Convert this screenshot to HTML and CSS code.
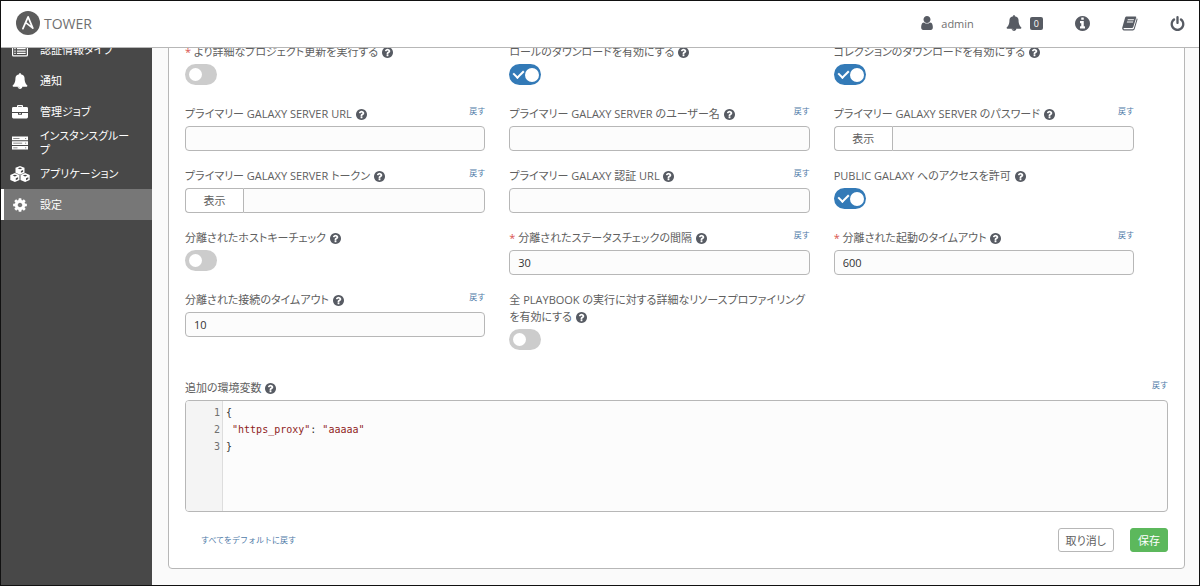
FILE: index.html
```html
<!DOCTYPE html>
<html lang="ja">
<head>
<meta charset="utf-8">
<meta name="viewport" content="width=device-width, initial-scale=1">
<title>TOWER - 設定</title>
<link rel="stylesheet" href="styles.css">
</head>
<body>
<svg class="sprite" aria-hidden="true">
  <symbol id="i-help" viewBox="128 128 1536 1536"><path d="M1024 1376v-192q0-14-9-23t-23-9h-192q-14 0-23 9t-9 23v192q0 14 9 23t23 9h192q14 0 23-9t9-23zm256-672q0-88-55.500-163t-138.500-116-170-41q-243 0-371 213-15 24 8 42l132 100q7 6 19 6 16 0 25-12 53-68 86-92 34-24 86-24 48 0 85.500 26t37.500 59q0 38-20 61t-68 45q-63 28-115.500 86.500t-52.500 125.500v36q0 14 9 23t23 9h192q14 0 23-9t9-23q0-19 21.500-49.500t54.500-49.500q32-18 49-28.500t46-35 44.500-48 28-60.500 12.500-81zm384 192q0 209-103 385.500t-279.500 279.500-385.500 103-385.500-103-279.500-279.500-103-385.500 103-385.500 279.500-279.500 385.500-103 385.500 103 279.500 279.500 103 385.500z"/></symbol>
  <symbol id="i-bell" viewBox="0 0 1792 1792"><path d="M912 1696q0-16-16-16-59 0-101.500-42.500t-42.500-101.500q0-16-16-16t-16 16q0 73 51.500 124.500t124.500 51.500q16 0 16-16zm816-288q0 52-38 90t-90 38h-448q0 106-75 181t-181 75-181-75-75-181h-448q-52 0-90-38t-38-90q50-42 91-88t85-119.500 74.500-158.500 50-206 19.500-260q0-152 117-282.500t307-158.500q-8-19-8-39 0-40 28-68t68-28 68 28 28 68q0 20-8 39 190 28 307 158.500t117 282.500q0 139 19.500 260t50 206 74.500 158.500 85 119.500 91 88z"/></symbol>
</svg>

<header class="topbar">
  <a class="brand" href="#">
    <svg class="brand-mark" viewBox="0 0 24 24" aria-hidden="true"><circle cx="12" cy="12" r="12" fill="#5c5c5c"/><path d="M6.900 17.600 12.100 5.900l4.700 11.300-7-5.500" fill="none" stroke="#fff" stroke-width="1.700" stroke-linejoin="round" stroke-linecap="round"/></svg>
    <span>TOWER</span>
  </a>
  <nav class="tools" aria-label="ユーザー">
    <a class="tool" href="#">
      <svg class="icon icon-user" viewBox="256 128 1280 1536" aria-hidden="true"><path d="M1536 1399q0 109-62.500 187t-150.500 78h-854q-88 0-150.500-78t-62.500-187q0-85 8.500-160.500t31.500-152 58.500-131 94-89 134.500-34.500q131 128 313 128t313-128q76 0 134.500 34.500t94 89 58.500 131 31.500 152 8.500 160.500zm-256-887q0 159-112.500 271.500t-271.500 112.500-271.500-112.500-112.500-271.500 112.500-271.500 271.500-112.500 271.500 112.500 112.500 271.500z"/></svg>
      <span>admin</span>
    </a>
    <a class="tool" href="#" aria-label="通知">
      <svg class="icon icon-bell" aria-hidden="true"><use href="#i-bell"/></svg>
      <span class="badge">0</span>
    </a>
    <a class="tool" href="#" aria-label="情報">
      <svg class="icon" viewBox="128 128 1536 1536" aria-hidden="true"><path d="M1152 1376v-160q0-14-9-23t-23-9h-96v-512q0-14-9-23t-23-9h-320q-14 0-23 9t-9 23v160q0 14 9 23t23 9h96v320h-96q-14 0-23 9t-9 23v160q0 14 9 23t23 9h448q14 0 23-9t9-23zm-128-896v-160q0-14-9-23t-23-9h-192q-14 0-23 9t-9 23v160q0 14 9 23t23 9h192q14 0 23-9t9-23zm640 416q0 209-103 385.500t-279.500 279.500-385.500 103-385.500-103-279.500-279.500-103-385.500 103-385.500 279.500-279.500 385.500-103 385.500 103 279.500 279.500 103 385.500z"/></svg>
    </a>
    <a class="tool" href="#" aria-label="ドキュメント">
      <svg class="icon icon-book" viewBox="0 0 16 15" aria-hidden="true"><path fill-rule="evenodd" d="M4.200.5h9.300q1 0 .7 1L11.300 11q-.3.900-1.300.9H2.300q-1.100 0-.8.800.2.600 1.100.6h8.300q.7 0 .9-.7L14.600 3q.1-.4 0-.8 1.200.4.900 1.400l-2.800 9.500q-.4 1.400-1.900 1.400H2.400Q.8 14.500.300 13q-.2-.6 0-1.400L3 2Q3.300.5 4.200.5zM5.800 3.200l-.3 1h6.200l.3-1zM5.100 5.500l-.3 1H11l.3-1z"/></svg>
    </a>
    <a class="tool" href="#" aria-label="ログアウト">
      <svg class="icon" viewBox="128 0 1536 1664" aria-hidden="true"><path d="M1664 896q0 156-61 298t-164 245-245 164-298 61-298-61-245-164-164-245-61-298q0-182 80.500-343t226.500-270q43-32 95.500-25t83.500 50q32 42 24.500 94.500t-49.500 84.500q-98 74-151.500 181t-53.500 228q0 104 40.500 198.500t109.500 163.500 163.500 109.500 198.500 40.500 198.500-40.500 163.500-109.500 109.500-163.500 40.500-198.500q0-121-53.500-228t-151.500-181q-42-32-49.500-84.500t24.500-94.500q31-43 84-50t95 25q146 109 226.500 270t80.500 343zm-640-768v640q0 52-38 90t-90 38-90-38-38-90v-640q0-52 38-90t90-38 90 38 38 90z"/></svg>
    </a>
  </nav>
</header>

<div class="shell">
  <nav class="sidebar" aria-label="メイン">
    <a class="side-item" href="#"><svg class="side-icon" viewBox="0 0 16 16" aria-hidden="true"><path fill-rule="evenodd" d="M1.500 1.500h13q1.500 0 1.500 1.500v10q0 1.500-1.500 1.500h-13Q0 14.500 0 13V3q0-1.500 1.500-1.500zM1.200 4.500V13q0 .3.300.3h13q.3 0 .3-.3V4.500zM2.300 6h1.400v1.300H2.300zm2.600 0h8.800v1.300H4.900zM2.300 8.400h1.400v1.300H2.300zm2.600 0h8.800v1.300H4.900zM2.300 10.800h1.400v1.300H2.300zm2.600 0h8.800v1.300H4.900z"/></svg><span>認証情報タイプ</span></a>
    <a class="side-item" href="#"><svg class="side-icon" aria-hidden="true"><use href="#i-bell"/></svg><span>通知</span></a>
    <a class="side-item" href="#"><svg class="side-icon" viewBox="0 0 16 16" aria-hidden="true"><path fill-rule="evenodd" d="M5 3V2q0-1 1-1h4q1 0 1 1v1h3.600Q16 3 16 4.400V8H0V4.400Q0 3 1.400 3zm1.200 0h3.600v-.8H6.200zM0 9h6v1.200q0 .5.500.5h3q.5 0 .5-.5V9h6v4.100q0 1.400-1.400 1.400H1.400Q0 14.500 0 13.100zm7 0h2v.8H7z"/></svg><span>管理ジョブ</span></a>
    <a class="side-item" href="#"><svg class="side-icon" viewBox="0 0 16 16" aria-hidden="true"><path d="M0 1.500h16v3.700H0zM0 6.200h16v3.700H0zM0 10.900h16v3.700H0z"/><path d="M1.200 3h6.300v.8H1.200zM13 3h1.200v.8H13zM1.200 7.700h9v.8h-9zM13 7.700h1.200v.8H13zM1.200 12.400h4.300v.8H1.200zM13 12.400h1.200v.8H13z" fill="#666"/></svg><span>インスタンスグループ</span></a>
    <a class="side-item" href="#"><svg class="side-icon side-icon-wide" viewBox="0 0 20 16" aria-hidden="true"><path d="M10 0l4.500 1.700v5L10 8.700 5.500 6.700v-5zM4.900 7l4.600 1.900v5L4.900 16 .3 13.900v-5zM15.100 7l4.600 1.900v5L15.100 16l-4.600-2.100v-5z"/><path d="M10 1.400l2.300.9-2.300.9-2.300-.9zM4.900 8.700l2.300.9-2.300.9-2.300-.9zM15.100 8.700l2.300.9-2.300.9-2.300-.9zM10.900 5l2.200-.9v1.700l-2.200 1zM5.800 12.300l2.300-1v1.800l-2.300 1.100zM16 12.300l2.300-1v1.800L16 14.200z" fill="#484848"/></svg><span>アプリケーション</span></a>
    <a class="side-item side-item-active" href="#" aria-current="page"><svg class="side-icon" viewBox="0 0 1792 1792" aria-hidden="true"><path d="M1152 896q0-106-75-181t-181-75-181 75-75 181 75 181 181 75 181-75 75-181zm512-109v222q0 12-8 23t-20 13l-185 28q-19 54-39 91 35 50 107 138 10 12 10 25t-9 23q-27 37-99 108t-94 71q-12 0-26-9l-138-108q-44 23-91 38-16 136-29 186-7 28-36 28h-222q-14 0-24.500-8.500t-11.500-21.500l-28-184q-49-16-90-37l-141 107q-10 9-25 9-14 0-25-11-126-114-165-168-7-10-7-23 0-12 8-23 15-21 51-66.500t54-70.500q-27-50-41-99l-183-27q-13-2-21-12.500t-8-23.500v-222q0-12 8-23t19-13l186-28q14-46 39-92-40-57-107-138-10-12-10-24 0-10 9-23 26-36 98.500-107.500t94.500-71.500q13 0 26 10l138 107q44-23 91-38 16-136 29-186 7-28 36-28h222q14 0 24.500 8.500t11.500 21.500l28 184q49 16 90 37l142-107q9-9 24-9 13 0 25 10 129 119 165 170 7 8 7 22 0 12-8 23-15 21-51 66.500t-54 70.500q26 50 41 98l183 28q13 2 21 12.500t8 23.500z"/></svg><span>設定</span></a>
  </nav>

  <main class="main">
    <form class="panel">
      <div class="fields">
        <div class="field">
          <div class="field-head"><label for="f1"><span class="req">*</span> より詳細なプロジェクト更新を実行する <svg class="help"><use href="#i-help"/></svg></label></div>
          <input class="toggle" type="checkbox" id="f1">
        </div>
        <div class="field">
          <div class="field-head"><label for="f2">ロールのダウンロードを有効にする <svg class="help"><use href="#i-help"/></svg></label></div>
          <input class="toggle" type="checkbox" id="f2" checked>
        </div>
        <div class="field">
          <div class="field-head"><label for="f3">コレクションのダウンロードを有効にする <svg class="help"><use href="#i-help"/></svg></label></div>
          <input class="toggle" type="checkbox" id="f3" checked>
        </div>

        <div class="field">
          <div class="field-head"><label for="f4">プライマリー GALAXY SERVER URL <svg class="help"><use href="#i-help"/></svg></label><a class="revert" href="#">戻す</a></div>
          <input class="text" type="text" id="f4">
        </div>
        <div class="field">
          <div class="field-head"><label for="f5">プライマリー GALAXY SERVER のユーザー名 <svg class="help"><use href="#i-help"/></svg></label><a class="revert" href="#">戻す</a></div>
          <input class="text" type="text" id="f5">
        </div>
        <div class="field">
          <div class="field-head"><label for="f6">プライマリー GALAXY SERVER のパスワード <svg class="help"><use href="#i-help"/></svg></label><a class="revert" href="#">戻す</a></div>
          <div class="group"><button class="show" type="button">表示</button><input class="text" type="password" id="f6"></div>
        </div>

        <div class="field">
          <div class="field-head"><label for="f7">プライマリー GALAXY SERVER トークン <svg class="help"><use href="#i-help"/></svg></label><a class="revert" href="#">戻す</a></div>
          <div class="group"><button class="show" type="button">表示</button><input class="text" type="password" id="f7"></div>
        </div>
        <div class="field">
          <div class="field-head"><label for="f8">プライマリー GALAXY 認証 URL <svg class="help"><use href="#i-help"/></svg></label><a class="revert" href="#">戻す</a></div>
          <input class="text" type="text" id="f8">
        </div>
        <div class="field">
          <div class="field-head"><label for="f9">PUBLIC GALAXY へのアクセスを許可 <svg class="help"><use href="#i-help"/></svg></label></div>
          <input class="toggle" type="checkbox" id="f9" checked>
        </div>

        <div class="field">
          <div class="field-head"><label for="f10">分離されたホストキーチェック <svg class="help"><use href="#i-help"/></svg></label></div>
          <input class="toggle" type="checkbox" id="f10">
        </div>
        <div class="field">
          <div class="field-head"><label for="f11"><span class="req">*</span> 分離されたステータスチェックの間隔 <svg class="help"><use href="#i-help"/></svg></label><a class="revert" href="#">戻す</a></div>
          <input class="text" type="text" id="f11" value="30">
        </div>
        <div class="field">
          <div class="field-head"><label for="f12"><span class="req">*</span> 分離された起動のタイムアウト <svg class="help"><use href="#i-help"/></svg></label><a class="revert" href="#">戻す</a></div>
          <input class="text" type="text" id="f12" value="600">
        </div>

        <div class="field">
          <div class="field-head"><label for="f13">分離された接続のタイムアウト <svg class="help"><use href="#i-help"/></svg></label><a class="revert" href="#">戻す</a></div>
          <input class="text" type="text" id="f13" value="10">
        </div>
        <div class="field">
          <div class="field-head"><label for="f14">全 PLAYBOOK の実行に対する詳細なリソースプロファイリングを有効にする <svg class="help"><use href="#i-help"/></svg></label></div>
          <input class="toggle" type="checkbox" id="f14">
        </div>
      </div>

      <div class="field env">
        <div class="field-head"><span id="env-label">追加の環境変数 <svg class="help"><use href="#i-help"/></svg></span><a class="revert" href="#">戻す</a></div>
        <div class="editor">
          <div class="gutter" aria-hidden="true"><div>1</div><div>2</div><div>3</div></div>
          <div class="code" role="textbox" aria-multiline="true" aria-labelledby="env-label" contenteditable="true" spellcheck="false"><div>{</div><div> <span class="str">"https_proxy"</span>: <span class="str">"aaaaa"</span></div><div>}</div></div>
        </div>
      </div>

      <div class="actions">
        <a class="revert revert-all" href="#">すべてをデフォルトに戻す</a>
        <button class="btn" type="button">取り消し</button>
        <button class="btn btn-save" type="submit">保存</button>
      </div>
    </form>
  </main>
</div>
</body>
</html>
```

FILE: styles.css
```css
* { box-sizing: border-box; }

body {
  margin: 0;
  min-height: 100vh;
  display: flex;
  flex-direction: column;
  overflow: hidden;
  border: 1px solid #111;
  background: #fafafa;
  color: #606060;
  font: 11px/17px "Open Sans", "Noto Sans CJK JP", sans-serif;
  font-feature-settings: "palt";
}

a { color: inherit; text-decoration: none; }
button, input { font: inherit; font-feature-settings: inherit; color: inherit; margin: 0; }
.sprite { position: absolute; width: 0; height: 0; }

/* Top bar */
.topbar {
  position: relative;
  z-index: 1;
  flex: none;
  height: 47px;
  display: flex;
  align-items: center;
  justify-content: space-between;
  padding: 0 14px 2px 15px;
  background: #fff;
  border-bottom: 1px solid #b7b7b7;
}
.brand { display: flex; align-items: center; gap: 4px; font-size: 14px; color: #707070; }
.brand-mark { width: 24px; height: 24px; }
.tools { display: flex; align-items: center; gap: 32px; color: #707070; }
.tool { display: flex; align-items: center; gap: 8px; }
.icon { width: 15px; height: 15px; fill: #575b63; }
.icon-user { width: 12px; height: 14px; }
.icon-bell { width: 16px; height: 16px; }
.icon-book { width: 16px; }
.badge {
  padding: 0 4px;
  border-radius: 2px;
  background: #575b63;
  color: #fff;
  font-size: 9px;
  line-height: 13px;
}

/* Content scrolled partly beneath the top bar */
.shell { flex: 1; display: flex; margin-top: -14px; }

.sidebar { flex: none; width: 151px; background: #484848; color: #fff; }
.side-item {
  display: flex;
  align-items: center;
  height: 31px;
  padding-right: 16px;
  border-left: 3px solid transparent;
  line-height: 14px;
  word-break: break-all;
  gap: 12px;
  padding-left: 8px;
}
.side-icon { flex: none; width: 16px; height: 16px; fill: #fff; }
.side-icon-wide { width: 20px; margin: 0 -2px; }
.side-item-active { background: #777; border-left-color: #fff; }

.main { flex: 1; min-width: 0; padding: 0 14px 16px 16px; }
.panel {
  padding: 8px 16px 16px;
  background: #fff;
  border: 1px solid #b7b7b7;
  border-radius: 4px;
}

/* Fields */
.fields {
  display: grid;
  grid-template-columns: repeat(3, 1fr);
  gap: 16px 24px;
  padding-right: 34px;
}
.field { min-height: 46px; display: flex; flex-direction: column; gap: 4px; align-items: stretch; }
.field-head { display: flex; justify-content: space-between; align-items: flex-start; }
.req { color: #d9534f; }
.help { width: 11px; height: 11px; margin-left: 1px; vertical-align: -2px; fill: #575b63; }
.revert {
  color: #4f7ba8;
  font-size: 8px;
  line-height: 12px;
  font-feature-settings: normal;
  white-space: nowrap;
}

.text {
  width: 100%;
  min-width: 0;
  height: 25px;
  padding: 0 8px 1px;
  border: 1px solid #b7b7b7;
  border-radius: 4px;
  background: #fcfcfc;
  color: #333;
}
.group { display: flex; }
.group .text { border-radius: 0 4px 4px 0; }
.show {
  flex: none;
  width: 58px;
  border: 1px solid #b7b7b7;
  border-right: 0;
  border-radius: 4px 0 0 4px;
  background: #fff;
  padding: 0;
}

.toggle {
  appearance: none;
  position: relative;
  width: 32px;
  height: 21px;
  border-radius: 11px;
  background: #ccc;
}
.toggle::after {
  content: "";
  position: absolute;
  top: 4px;
  left: 4px;
  width: 13px;
  height: 13px;
  border-radius: 50%;
  background: #fff;
}
.toggle:checked { background: #337ab7; }
.toggle:checked::after { left: 16px; width: 14px; height: 14px; }
.toggle:checked::before {
  content: "";
  position: absolute;
  top: 4px;
  left: 6px;
  width: 5px;
  height: 8px;
  border: solid #fff;
  border-width: 0 2px 2px 0;
  transform: rotate(45deg);
}

/* Code editor */
.env { margin-top: 29px; }
.editor {
  display: flex;
  min-height: 112px;
  border: 1px solid #b7b7b7;
  border-radius: 4px;
  background: #fcfcfc;
  font: 10px/17px "DejaVu Sans Mono", monospace;
  overflow: hidden;
}
.gutter {
  flex: none;
  width: 37px;
  padding: 3px 2px;
  border-right: 1px solid #ddd;
  background: #f4f4f4;
  color: #707070;
  text-align: right;
}
.code { flex: 1; padding: 3px; color: #333; white-space: pre; outline: 0; }
.str { color: #8f1d1d; }

/* Footer */
.actions { display: flex; align-items: center; gap: 16px; margin-top: 16px; }
.revert-all { margin: 0 auto 0 16px; }
.btn {
  height: 24px;
  padding: 0 7px;
  border: 1px solid #b7b7b7;
  border-radius: 3px;
  background: #fff;
}
.btn-save { background: #5cb85c; border-color: #5cb85c; color: #fff; }
```
